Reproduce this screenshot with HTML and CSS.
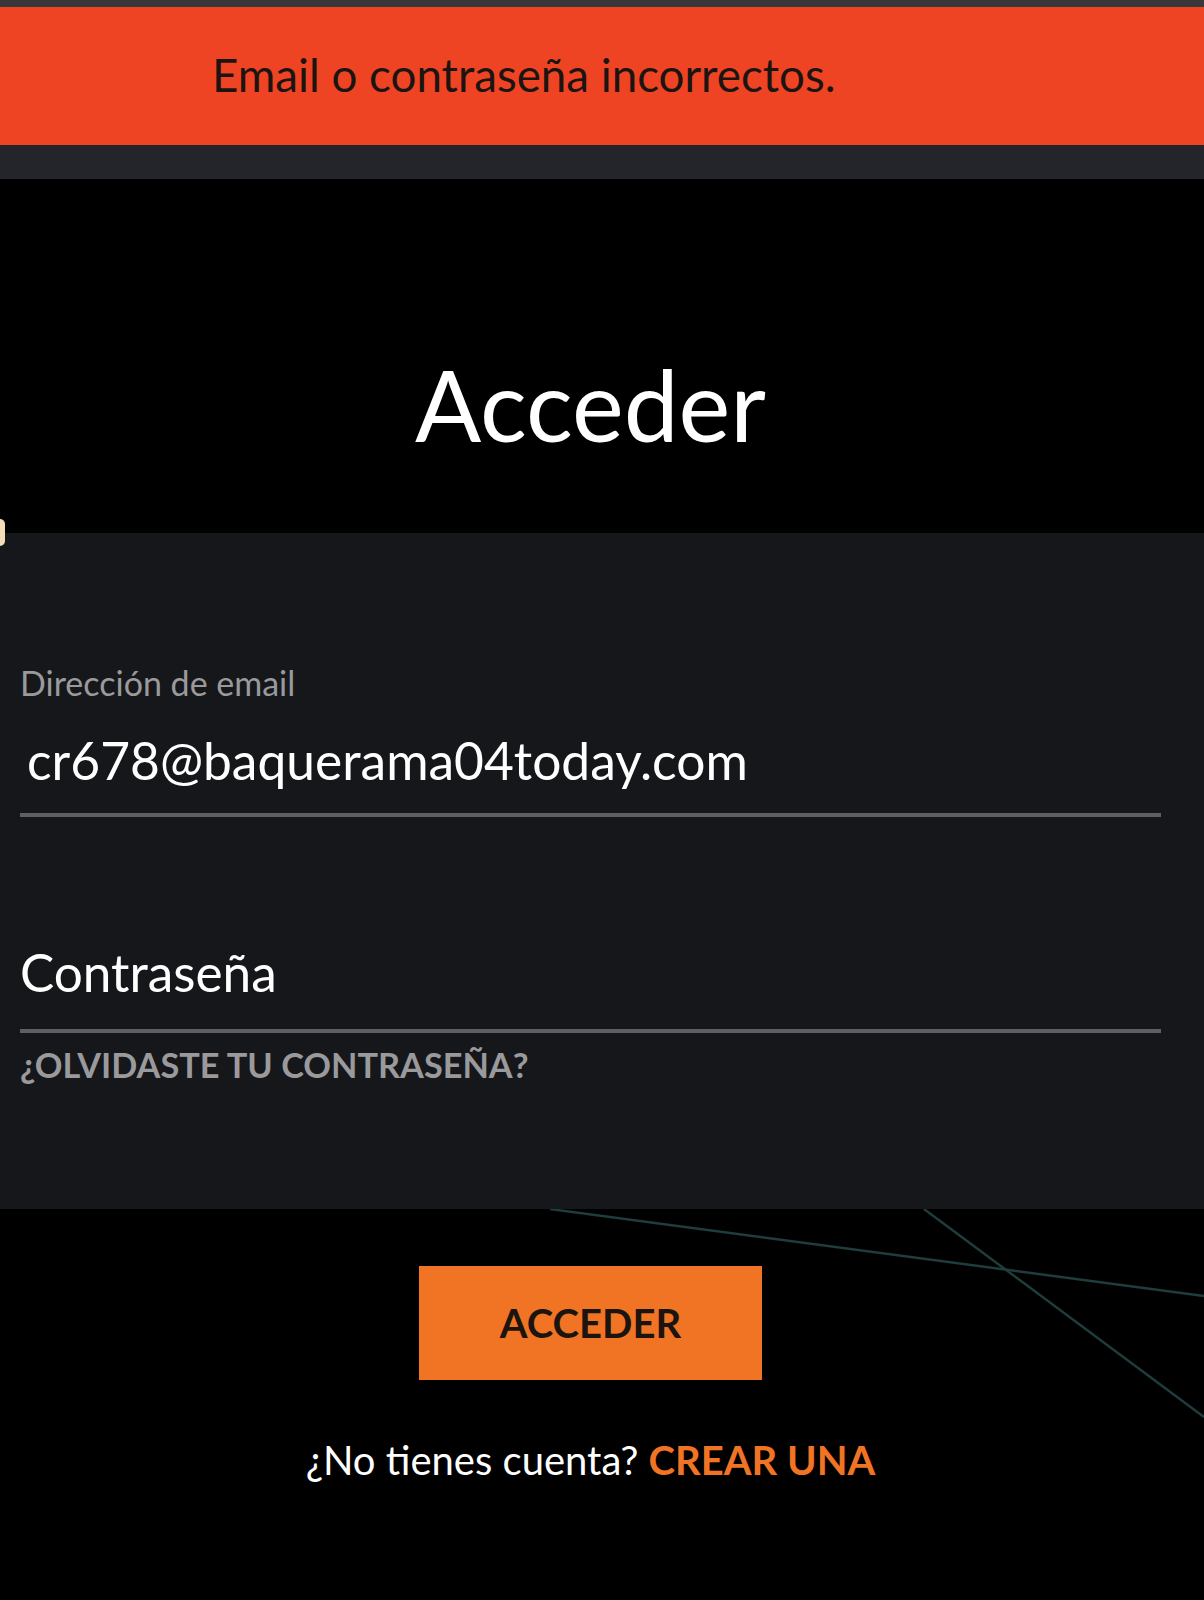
FILE: index.html
```html
<!DOCTYPE html>
<html lang="es">
<head>
<meta charset="utf-8">
<title>Acceder</title>
<link rel="stylesheet" href="styles.css">
</head>
<body>
<div class="topstrip"></div>
<div class="alert">Email o contraseña incorrectos.</div>
<div class="subbar"></div>
<main class="page">
  <section class="hero">
    <span class="edge-dot"></span>
    <h1 class="title">Acceder</h1>
  </section>
  <section class="card">
    <div class="field">
      <label class="field-label">Dirección de email</label>
      <div class="field-value">cr678@baquerama04today.com</div>
    </div>
    <div class="field field-pass">
      <div class="field-placeholder">Contraseña</div>
    </div>
    <a class="forgot">¿OLVIDASTE TU CONTRASEÑA?</a>
  </section>
  <section class="actions">
    <svg class="deco" width="1204" height="391" viewBox="0 0 1204 391" aria-hidden="true">
      <line x1="550" y1="0" x2="1204" y2="87" stroke="#1f3d3d" stroke-width="2.4"/>
      <line x1="924" y1="0" x2="1204" y2="208" stroke="#1f3d3d" stroke-width="2.4"/>
    </svg>
    <button class="btn">ACCEDER</button>
    <p class="signup">¿No tienes cuenta? <a class="signup-link">CREAR UNA</a></p>
  </section>
</main>
</body>
</html>
```
FILE: styles.css
```css
* { box-sizing: border-box; }
html, body { margin: 0; padding: 0; }
body {
  background: #000;
  font-family: Lato, "Open Sans", "Liberation Sans", sans-serif;
  width: 1204px;
  overflow: hidden;
}
.topstrip { height: 7px; background: #38383b; }
.alert {
  height: 138px;
  background: #ef4424;
  color: #1b1410;
  font-size: 45.7px;
  padding-left: 212px;
  display: flex;
  align-items: center;
  padding-bottom: 4px;
}
.subbar { height: 34px; background: #24252b; }
.page { width: 1204px; }
.hero {
  position: relative;
  height: 354px;
  display: flex;
  justify-content: center;
  padding-right: 23px;
}
.edge-dot {
  position: absolute;
  left: -5px;
  top: 340px;
  width: 10px;
  height: 27px;
  border-radius: 5px;
  background: #f3dcb7;
}
.title {
  margin: 0;
  margin-top: 176px;
  font-weight: 400;
  font-size: 98px;
  line-height: 1;
  color: #fff;
}
.card {
  background: #16171b;
  height: 676px;
  padding: 130px 43px 0 20px;
}
.field {
  border-bottom: 4px solid #5e5f63;
}
.field-label {
  display: block;
  color: #9a9a9c;
  font-size: 34px;
  line-height: 40px;
}
.field-value {
  color: #fff;
  font-size: 51.5px;
  line-height: 60px;
  padding: 27px 0 23px 7px;
}
.field-pass { margin-top: 125px; }
.field-placeholder {
  color: #fff;
  font-size: 51.3px;
  line-height: 60px;
  padding-bottom: 27px;
}
.forgot {
  display: block;
  margin-top: 12px;
  color: #9a9a9c;
  font-weight: 700;
  font-size: 34.3px;
  line-height: 40px;
}
.actions {
  position: relative;
  height: 391px;
  display: flex;
  flex-direction: column;
  align-items: center;
  padding-right: 23px;
}
.deco { position: absolute; left: 0; top: 0; }
.btn {
  position: relative;
  margin-top: 57px;
  width: 343px;
  height: 114px;
  border: 0;
  background: #f07424;
  color: #1c140e;
  font-family: inherit;
  font-weight: 700;
  font-size: 40px;
}
.signup {
  position: relative;
  margin: 55px 0 0;
  color: #fff;
  font-size: 40px;
  line-height: 50px;
}
.signup-link { color: #f07424; font-weight: 700; }
```
